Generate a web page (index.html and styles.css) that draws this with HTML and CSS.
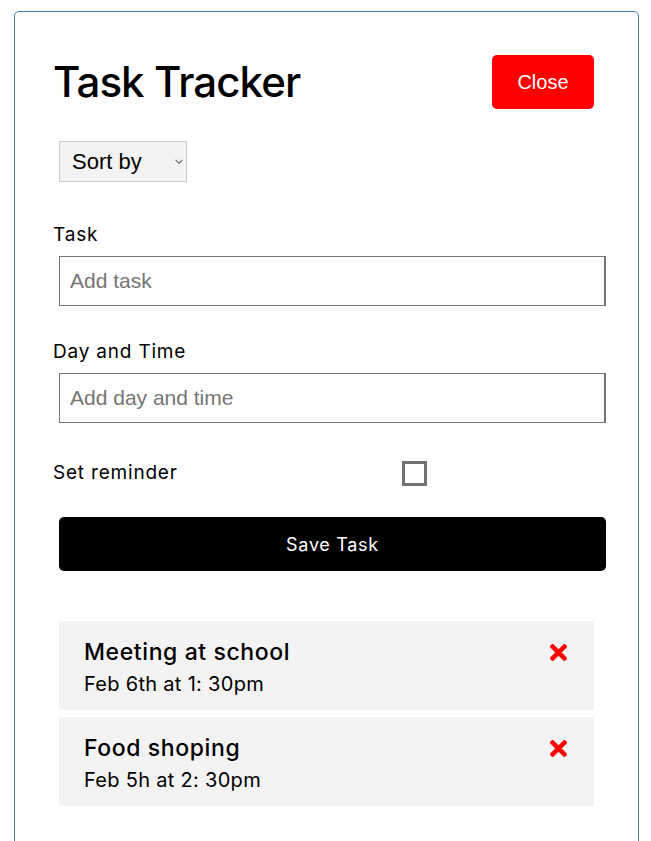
FILE: index.html
```html
<!DOCTYPE html>
<html lang="en">
<head>
<meta charset="utf-8">
<title>Task Tracker</title>
<link rel="stylesheet" href="styles.css">
</head>
<body>
<div class="container">
  <header class="header">
    <h1 class="title">Task Tracker</h1>
    <button class="btn btn-close" type="button">Close</button>
  </header>
  <div class="sort-wrap">
    <select class="sort">
      <option>Sort by</option>
    </select>
    <svg class="chev" viewBox="0 0 8 5" aria-hidden="true"><path d="M0.5 0.8 L4 4.2 L7.5 0.8"/></svg>
  </div>
  <form class="add-form">
    <div class="form-control">
      <label class="label">Task</label>
      <input class="text-input" type="text" placeholder="Add task">
    </div>
    <div class="form-control">
      <label class="label">Day and Time</label>
      <input class="text-input" type="text" placeholder="Add day and time">
    </div>
    <div class="form-check">
      <label class="label">Set reminder</label>
      <input class="check" type="checkbox">
    </div>
    <button class="btn btn-save" type="button">Save Task</button>
  </form>
  <div class="tasks">
    <div class="task">
      <div class="task-head">
        <h3 class="task-title">Meeting at school</h3>
        <svg class="del" viewBox="0 80 352 352" aria-hidden="true"><path d="M242.72 256l100.07-100.07c12.28-12.28 12.28-32.19 0-44.48l-22.24-22.24c-12.28-12.28-32.19-12.28-44.48 0L176 189.28 75.93 89.21c-12.28-12.28-32.19-12.28-44.48 0L9.21 111.45c-12.28 12.28-12.28 32.19 0 44.48L109.28 256 9.21 356.07c-12.28 12.28-12.28 32.19 0 44.48l22.24 22.24c12.28 12.28 32.2 12.28 44.48 0L176 322.72l100.07 100.07c12.28 12.28 32.2 12.28 44.48 0l22.24-22.24c12.28-12.28 12.28-32.19 0-44.48L242.72 256z"/></svg>
      </div>
      <p class="task-date">Feb 6th at 1: 30pm</p>
    </div>
    <div class="task">
      <div class="task-head">
        <h3 class="task-title">Food shoping</h3>
        <svg class="del" viewBox="0 80 352 352" aria-hidden="true"><path d="M242.72 256l100.07-100.07c12.28-12.28 12.28-32.19 0-44.48l-22.24-22.24c-12.28-12.28-32.19-12.28-44.48 0L176 189.28 75.93 89.21c-12.28-12.28-32.19-12.28-44.48 0L9.21 111.45c-12.28 12.28-12.28 32.19 0 44.48L109.28 256 9.21 356.07c-12.28 12.28-12.28 32.19 0 44.48l22.24 22.24c12.28 12.28 32.2 12.28 44.48 0L176 322.72l100.07 100.07c12.28 12.28 32.2 12.28 44.48 0l22.24-22.24c12.28-12.28 12.28-32.19 0-44.48L242.72 256z"/></svg>
      </div>
      <p class="task-date">Feb 5h at 2: 30pm</p>
    </div>
  </div>
</div>
</body>
</html>
```

FILE: styles.css
```css
* {
  box-sizing: border-box;
}

html, body {
  margin: 0;
  padding: 0;
  background: #fff;
  overflow: hidden;
  height: 841px;
}

body {
  font-family: Inter, "Noto Sans", sans-serif;
  color: #000;
}

.container {
  width: 625px;
  margin: 11px 0 0 14px;
  border: 1px solid #4682b4;
  border-radius: 5px;
  padding: 43px 38px 80px 38px;
}

.header {
  display: flex;
  align-items: center;
  justify-content: space-between;
}

.title {
  margin: 0;
  font-size: 42px;
  font-weight: 500;
  line-height: 1;
  letter-spacing: -0.9px;
}

.btn {
  border: none;
  border-radius: 5px;
  cursor: pointer;
  color: #fff;
}

.btn-close {
  width: 102px;
  height: 54px;
  margin-right: 6px;
  background: #ff0000;
  font-family: "Liberation Sans", Arial, sans-serif;
  font-size: 20px;
}

.sort-wrap {
  position: relative;
  width: 128px;
  margin: 32px 0 0 6px;
}

.sort {
  display: block;
  appearance: none;
  -webkit-appearance: none;
  width: 128px;
  height: 41px;
  padding: 0 6px 0 12px;
  background-color: #f3f3f3;
  border: 1px solid #cccccc;
  border-radius: 0;
  font-family: "Liberation Sans", Arial, sans-serif;
  font-size: 22px;
  color: #000;
}

.chev {
  position: absolute;
  left: 116px;
  top: 18px;
  width: 8px;
  height: 5px;
  fill: none;
  stroke: #6b6b6b;
  stroke-width: 1.1;
  pointer-events: none;
}

.add-form {
  margin-top: 39px;
}

.form-control + .form-control {
  margin-top: 32px;
}

.label {
  display: block;
  font-size: 19px;
  line-height: 28px;
  letter-spacing: 0.8px;
}

.text-input {
  display: block;
  width: 100%;
  height: 50px;
  margin: 7px 0 0 6px;
  padding: 0 10px;
  border: 1px solid #767676;
  border-right-width: 2px;
  border-radius: 0;
  font-family: "Liberation Sans", Arial, sans-serif;
  font-size: 21px;
}

.text-input::placeholder {
  color: #757575;
}

.form-check {
  display: grid;
  grid-template-columns: 1fr 2fr;
  align-items: center;
  margin-top: 36px;
}

.check {
  appearance: none;
  -webkit-appearance: none;
  justify-self: center;
  width: 25px;
  height: 25px;
  margin: 0 6px 0 0;
  border: 3px solid #717171;
  border-radius: 0;
  background: #fff;
}

.btn-save {
  display: block;
  width: 100%;
  height: 54px;
  margin: 30px 0 0 6px;
  background: #000;
  font-family: Inter, "Noto Sans", sans-serif;
  font-size: 18px;
  letter-spacing: 0.7px;
}

.tasks {
  display: flex;
  flex-direction: column;
  gap: 7px;
  margin-top: 50px;
  margin-left: 6px;
  width: 535px;
}

.task {
  background: #f3f3f3;
  padding: 16px 27px 12px 25px;
}

.task-head {
  display: flex;
  align-items: center;
  justify-content: space-between;
}

.task-title {
  margin: 0;
  font-size: 23px;
  font-weight: 500;
  line-height: 30px;
  letter-spacing: 0.6px;
}

.del {
  width: 17px;
  height: 17px;
  fill: #ff0000;
}

.task-date {
  margin: 3px 0 0 0;
  font-size: 20px;
  line-height: 28px;
  letter-spacing: 0.3px;
}
```
